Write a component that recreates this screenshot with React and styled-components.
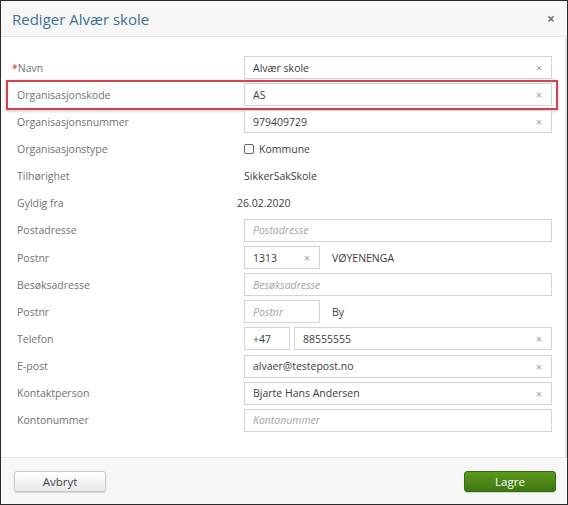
import React from "react";
import styled, { createGlobalStyle } from "styled-components";

const GlobalStyle = createGlobalStyle`
  body {
    margin: 0;
    font-family: "Open Sans", "Liberation Sans", sans-serif;
    background: #fff;
  }
`;

const Dialog = styled.div`
  width: 568px;
  height: 505px;
  box-sizing: border-box;
  border: 1px solid #2a2a2a;
  background: #fff;
  display: flex;
  flex-direction: column;
  box-shadow: inset -2px 0 0 #e4e4e4;
`;

const Header = styled.div`
  height: 36px;
  flex-shrink: 0;
  box-sizing: border-box;
  background: #f7f7f7;
  border-bottom: 1px solid #e6e6e6;
  display: flex;
  align-items: center;
  justify-content: space-between;
  padding: 0 12px 0 11px;
`;

const Title = styled.h1`
  margin: 0;
  font-size: 15px;
  font-weight: 400;
  color: #3c7093;
`;

const Close = styled.span`
  font-size: 14px;
  font-weight: 700;
  color: #777;
  line-height: 1;
`;

const Body = styled.div`
  flex: 1;
  padding: 19px 15px 0 16px;
  display: flex;
  flex-direction: column;
  gap: 4px;
`;

const Row = styled.div`
  position: relative;
  display: grid;
  grid-template-columns: 227px 1fr;
  align-items: center;
  height: 23.15px;

  ${(p) =>
    p.$highlight &&
    `
    &::before {
      content: "";
      position: absolute;
      left: -11px;
      right: -6px;
      top: -3px;
      bottom: -4px;
      border: 2px solid #d2444d;
      box-shadow: 0 1px 3px rgba(0, 0, 0, 0.25);
      pointer-events: none;
    }
  `}
`;

const Label = styled.span`
  font-size: 10.5px;
  color: #717171;
`;

const Required = styled.span`
  color: #c9302c;
  margin-left: -5px;
`;

const Control = styled.div`
  display: flex;
  align-items: center;
  gap: 4px;
  height: 100%;
  margin-left: ${(p) => p.$shift || 0}px;
`;

const Box = styled.div`
  display: flex;
  align-items: center;
  box-sizing: border-box;
  height: 23px;
  width: ${(p) => (p.$width ? `${p.$width}px` : "auto")};
  flex: ${(p) => (p.$width ? "none" : "1")};
  border: 1px solid #d4d4d4;
  background: #fff;
  padding: 0 9px 0 8px;
`;

const Value = styled.span`
  flex: 1;
  font-size: 10.5px;
  color: #3d3d3d;
  white-space: nowrap;
`;

const Placeholder = styled(Value)`
  font-style: italic;
  color: #a5a5a5;
`;

const Clear = styled.span`
  font-size: 11px;
  color: #9a9a9a;
  line-height: 1;
`;

const Text = styled.span`
  font-size: 10.5px;
  color: #3d3d3d;
  margin-left: ${(p) => p.$gap || 0}px;
`;

const Check = styled.span`
  width: 8px;
  height: 8px;
  border: 1px solid #666;
  border-radius: 2px;
  margin-right: 1px;
`;

const Footer = styled.div`
  height: 47px;
  flex-shrink: 0;
  box-sizing: border-box;
  background: #f7f7f7;
  border-top: 1px solid #e6e6e6;
  display: flex;
  align-items: flex-start;
  justify-content: space-between;
  padding: 13px 11px 0 13px;
`;

const Button = styled.button`
  width: 92px;
  height: 21px;
  border-radius: 3px;
  font-family: inherit;
  font-size: 11.5px;
  padding: 0;
  cursor: pointer;
  border: 1px solid ${(p) => (p.$primary ? "#376b0d" : "#c9c9c9")};
  color: ${(p) => (p.$primary ? "#fff" : "#444")};
  background: ${(p) =>
    p.$primary
      ? "linear-gradient(#5b9a1d, #3f7611)"
      : "linear-gradient(#ffffff, #e9e9e9)"};
  box-shadow: 0 1px 1px rgba(0, 0, 0, 0.15);
`;

const Input = ({ value, placeholder, width, clear = true }) => (
  <Box $width={width}>
    {value ? <Value>{value}</Value> : <Placeholder>{placeholder}</Placeholder>}
    {value && clear && <Clear>×</Clear>}
  </Box>
);

export default function App() {
  return (
    <>
      <GlobalStyle />
      <Dialog>
        <Header>
          <Title>Rediger Alvær skole</Title>
          <Close>×</Close>
        </Header>

        <Body>
          <Row>
            <Label>
              <Required>*</Required>Navn
            </Label>
            <Control>
              <Input value="Alvær skole" />
            </Control>
          </Row>
          <Row $highlight>
            <Label>Organisasjonskode</Label>
            <Control>
              <Input value="AS" />
            </Control>
          </Row>
          <Row>
            <Label>Organisasjonsnummer</Label>
            <Control>
              <Input value="979409729" />
            </Control>
          </Row>
          <Row>
            <Label>Organisasjonstype</Label>
            <Control>
              <Check />
              <Text>Kommune</Text>
            </Control>
          </Row>
          <Row>
            <Label>Tilhørighet</Label>
            <Control>
              <Text>SikkerSakSkole</Text>
            </Control>
          </Row>
          <Row>
            <Label>Gyldig fra</Label>
            <Control $shift={-7}>
              <Text>26.02.2020</Text>
            </Control>
          </Row>
          <Row>
            <Label>Postadresse</Label>
            <Control>
              <Input placeholder="Postadresse" />
            </Control>
          </Row>
          <Row>
            <Label>Postnr</Label>
            <Control>
              <Input value="1313" width={76} />
              <Text $gap={8}>VØYENENGA</Text>
            </Control>
          </Row>
          <Row>
            <Label>Besøksadresse</Label>
            <Control>
              <Input placeholder="Besøksadresse" />
            </Control>
          </Row>
          <Row>
            <Label>Postnr</Label>
            <Control>
              <Input placeholder="Postnr" width={76} />
              <Text $gap={8}>By</Text>
            </Control>
          </Row>
          <Row>
            <Label>Telefon</Label>
            <Control>
              <Input value="+47" width={46} clear={false} />
              <Input value="88555555" />
            </Control>
          </Row>
          <Row>
            <Label>E-post</Label>
            <Control>
              <Input value="alvaer@testepost.no" />
            </Control>
          </Row>
          <Row>
            <Label>Kontaktperson</Label>
            <Control>
              <Input value="Bjarte Hans Andersen" />
            </Control>
          </Row>
          <Row>
            <Label>Kontonummer</Label>
            <Control>
              <Input placeholder="Kontonummer" />
            </Control>
          </Row>
        </Body>

        <Footer>
          <Button>Avbryt</Button>
          <Button $primary>Lagre</Button>
        </Footer>
      </Dialog>
    </>
  );
}
